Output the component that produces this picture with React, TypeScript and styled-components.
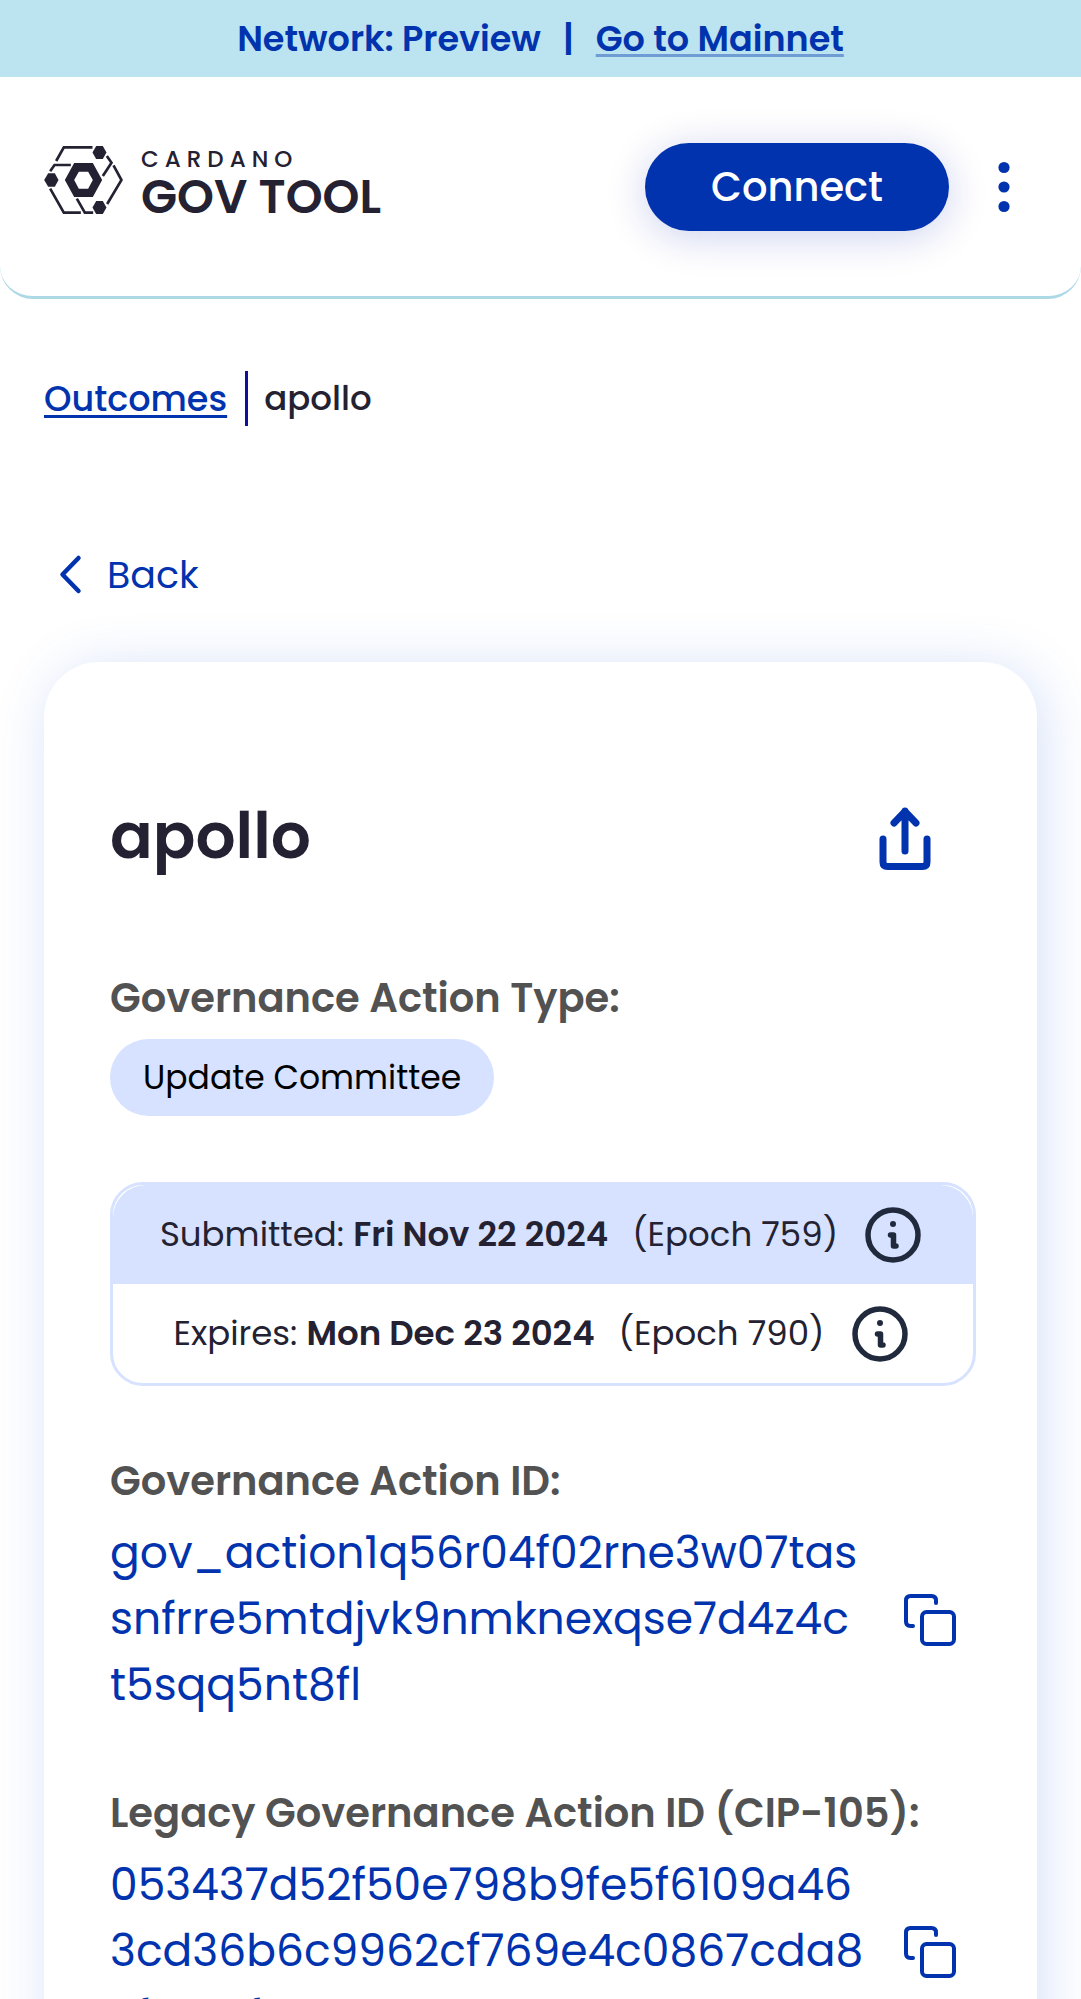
import React from "react";
import styled, { createGlobalStyle } from "styled-components";

const blue = "#0033ad";
const ink = "#242232";
const pale = "#d6e2ff";

const GlobalStyle = createGlobalStyle`
  *, *::before, *::after { box-sizing: border-box; }
  body {
    margin: 0;
    background: #fff;
    color: ${ink};
    font-family: Poppins, Inter, sans-serif;
    font-size: 34px;
    overflow-x: hidden;
  }
  button { font: inherit; cursor: pointer; border: 0; background: none; padding: 0; }
  h1, h2, p { margin: 0; }
`;

const Banner = styled.aside`
  display: flex;
  align-items: center;
  justify-content: center;
  gap: 22px;
  height: 77px;
  background: #bbe3f0;
  color: ${blue};
  font-size: 35px;
  font-weight: 600;
`;

const BannerLink = styled.a`
  color: ${blue};
  text-decoration-color: rgba(0, 51, 173, 0.4);
  text-decoration-thickness: 3px;
  text-underline-offset: 3px;
`;

const Header = styled.header`
  display: flex;
  align-items: center;
  justify-content: space-between;
  height: 222px;
  padding: 0 44px;
  border-bottom: 3px solid #add8e6;
  border-radius: 0 0 33px 33px;
`;

const Logo = styled.a`
  display: flex;
  align-items: center;
  gap: 18px;
  padding-bottom: 14px;
  color: ${ink};
  text-decoration: none;
`;

const Wordmark = styled.span`
  display: flex;
  flex-direction: column;
  padding-top: 10px;
`;

const LogoTop = styled.span`
  font-size: 23px;
  line-height: 24px;
  font-weight: 500;
  letter-spacing: 6px;
`;

const LogoMain = styled.span`
  font-size: 47px;
  line-height: 52px;
  font-weight: 600;
`;

const HeaderActions = styled.div`
  display: flex;
  align-items: center;
  gap: 22px;
`;

const ConnectButton = styled.button`
  height: 88px;
  padding: 0 66px;
  border-radius: 50px;
  background: ${blue};
  color: #fff;
  font-size: 40px;
  font-weight: 500;
  box-shadow: 0 6px 40px rgba(0, 32, 170, 0.2);
`;

const IconButton = styled.button`
  display: flex;
  align-items: center;
  justify-content: center;
  flex: none;
  width: 66px;
  height: 66px;
  color: ${blue};
`;

const Main = styled.main`
  padding: 72px 44px 44px;
`;

const Breadcrumbs = styled.nav`
  display: flex;
  align-items: center;
  height: 55px;
  font-weight: 500;
`;

const Crumb = styled.a`
  padding-right: 18px;
  color: ${blue};
  font-size: 35px;
  text-decoration-thickness: 3px;
  text-underline-offset: 4px;
`;

const CurrentCrumb = styled.span`
  display: flex;
  align-items: center;
  height: 55px;
  padding-left: 16px;
  border-left: 3px solid #10109c;
`;

const BackButton = styled.button`
  display: flex;
  align-items: center;
  gap: 8px;
  height: 66px;
  margin: 115px 0 55px;
  color: ${blue};
  font-size: 38px;
`;

const Card = styled.article`
  display: flex;
  flex-direction: column;
  gap: 66px;
  padding: 110px 66px;
  border-radius: 55px;
  background: #fff;
  box-shadow: 6px 6px 55px rgba(47, 98, 220, 0.2);
`;

const TitleRow = styled.div`
  display: flex;
  align-items: center;
  justify-content: space-between;
  height: 131px;
  padding-right: 33px;
`;

const Title = styled.h1`
  padding-bottom: 4px;
  font-size: 63px;
  line-height: 80px;
  font-weight: 600;
`;

const Field = styled.section`
  display: flex;
  flex-direction: column;
  align-items: flex-start;
  gap: 10px;
`;

const FieldLabel = styled.h2`
  color: #525252;
  font-size: 40px;
  line-height: 58px;
  font-weight: 600;
`;

const Chip = styled.span`
  display: flex;
  align-items: center;
  height: 77px;
  margin-top: 2px;
  padding: 0 33px;
  border-radius: 50px;
  background: ${pale};
  color: #000;
  font-size: 33px;
`;

const Dates = styled.div`
  margin-right: -5px;
  border: 3px solid ${pale};
  border-radius: 33px;
`;

const DateRow = styled.div<{ $filled?: boolean }>`
  display: flex;
  align-items: center;
  justify-content: center;
  height: 99px;
  border-radius: ${(p) => (p.$filled ? "33px 33px 0 0" : "0")};
  background: ${(p) => (p.$filled ? pale : "transparent")};
  color: ${ink};
`;

const DateText = styled.p`
  margin-right: 22px;
`;

const DateValue = styled.strong`
  margin-right: 24px;
  font-weight: 600;
`;

const InfoButton = styled(IconButton)`
  color: #212a3d;
`;

const IdRow = styled.div`
  display: flex;
  align-items: center;
  justify-content: space-between;
  align-self: stretch;
  padding-right: 9px;
`;

const IdText = styled.p`
  color: ${blue};
  font-size: 44px;
  line-height: 66px;
  white-space: pre-line;
`;

const LogoMark = () => (
  <svg width="79" height="68" viewBox="0 0 236 204" fill="none" stroke="currentColor" strokeWidth="8" aria-hidden="true">
    <path d="M36 45L59 4H145M188 30L202 50L176 90M18 76L31 57H80M208 58L232 102L189 174M18 128L59 200H110M98 158L122 200H147" />
    <g fill="currentColor" stroke="none">
      <path d="M156 0h20l11 19.500-11 19.500h-20l-11-19.500z" />
      <path d="M12 82h20l11 20-11 20H12L0 102z" />
      <path d="M156 165h20l11 19.500-11 19.500h-20l-11-19.500z" />
      <path fillRule="evenodd" d="M90 51h56l28 51-28 51H90l-28-51zM104 77l-14 25 14 26h28l14-26-14-25z" />
    </g>
  </svg>
);

const KebabIcon = () => (
  <svg width="66" height="66" viewBox="0 0 66 66" fill="currentColor" aria-hidden="true">
    <circle cx="33" cy="13.500" r="5.600" />
    <circle cx="33" cy="33" r="5.600" />
    <circle cx="33" cy="52.500" r="5.600" />
  </svg>
);

const ChevronIcon = () => (
  <svg width="55" height="55" viewBox="0 0 55 55" fill="none" stroke="currentColor" strokeWidth="4.500" strokeLinecap="round" strokeLinejoin="round" aria-hidden="true">
    <path d="M34.500 11L18.500 27.500L34.500 44" />
  </svg>
);

const ShareIcon = () => (
  <svg width="66" height="66" viewBox="0 0 66 66" fill="none" stroke="currentColor" strokeWidth="7" strokeLinecap="round" strokeLinejoin="round" aria-hidden="true">
    <path d="M33 46V6M22 18L33 6.500L44 18M11 34V57Q11 61.500 15.500 61.500H50.500Q55 61.500 55 57V34" />
  </svg>
);

const InfoIcon = () => (
  <svg width="66" height="66" viewBox="0 0 66 66" fill="none" stroke="currentColor" strokeLinecap="round" strokeLinejoin="round" aria-hidden="true">
    <circle cx="33" cy="33" r="25" strokeWidth="5.500" />
    <circle cx="33" cy="22" r="3" fill="currentColor" stroke="none" />
    <path d="M30.500 33H33.500V44H36" strokeWidth="5.500" />
  </svg>
);

const CopyIcon = () => (
  <svg width="55" height="55" viewBox="0 0 55 55" fill="none" stroke="currentColor" strokeWidth="4" strokeLinecap="round" strokeLinejoin="round" aria-hidden="true">
    <rect x="20" y="20" width="32" height="32" rx="4.500" />
    <path d="M11 34H8.500Q4 34 4 29.500V8.500Q4 4 8.500 4H29.500Q34 4 34 8.500V11" />
  </svg>
);

const dates = [
  { label: "Submitted", value: "Fri Nov 22 2024", epoch: 759 },
  { label: "Expires", value: "Mon Dec 23 2024", epoch: 790 },
];

const ids = [
  { label: "Governance Action ID:", lines: ["gov_action1q56r04f02rne3w07tas", "snfrre5mtdjvk9nmknexqse7d4z4c", "t5sqq5nt8fl"] },
  { label: "Legacy Governance Action ID (CIP-105):", lines: ["053437d52f50e798b9fe5f6109a46", "3cd36b6c9962cf769e4c0867cda8", "2f0901f#0"] },
];

export default function App() {
  return (
    <>
      <GlobalStyle />
      <Banner>
        <span>Network: Preview</span>
        <span>|</span>
        <BannerLink href="#mainnet">Go to Mainnet</BannerLink>
      </Banner>
      <Header>
        <Logo href="#home">
          <LogoMark />
          <Wordmark>
            <LogoTop>CARDANO</LogoTop>
            <LogoMain>GOV TOOL</LogoMain>
          </Wordmark>
        </Logo>
        <HeaderActions>
          <ConnectButton type="button">Connect</ConnectButton>
          <IconButton type="button" aria-label="Menu">
            <KebabIcon />
          </IconButton>
        </HeaderActions>
      </Header>
      <Main>
        <Breadcrumbs aria-label="Breadcrumb">
          <Crumb href="#outcomes">Outcomes</Crumb>
          <CurrentCrumb>apollo</CurrentCrumb>
        </Breadcrumbs>
        <BackButton type="button">
          <ChevronIcon />
          Back
        </BackButton>
        <Card>
          <TitleRow>
            <Title>apollo</Title>
            <IconButton type="button" aria-label="Share">
              <ShareIcon />
            </IconButton>
          </TitleRow>
          <Field>
            <FieldLabel>Governance Action Type:</FieldLabel>
            <Chip>Update Committee</Chip>
          </Field>
          <Dates>
            {dates.map((d, i) => (
              <DateRow key={d.label} $filled={i === 0}>
                <DateText>
                  {d.label}: <DateValue>{d.value}</DateValue>(Epoch {d.epoch})
                </DateText>
                <InfoButton type="button" aria-label={`About ${d.label}`}>
                  <InfoIcon />
                </InfoButton>
              </DateRow>
            ))}
          </Dates>
          {ids.map((f) => (
            <Field key={f.label}>
              <FieldLabel>{f.label}</FieldLabel>
              <IdRow>
                <IdText>{f.lines.join("\n")}</IdText>
                <IconButton type="button" aria-label="Copy">
                  <CopyIcon />
                </IconButton>
              </IdRow>
            </Field>
          ))}
        </Card>
      </Main>
    </>
  );
}
